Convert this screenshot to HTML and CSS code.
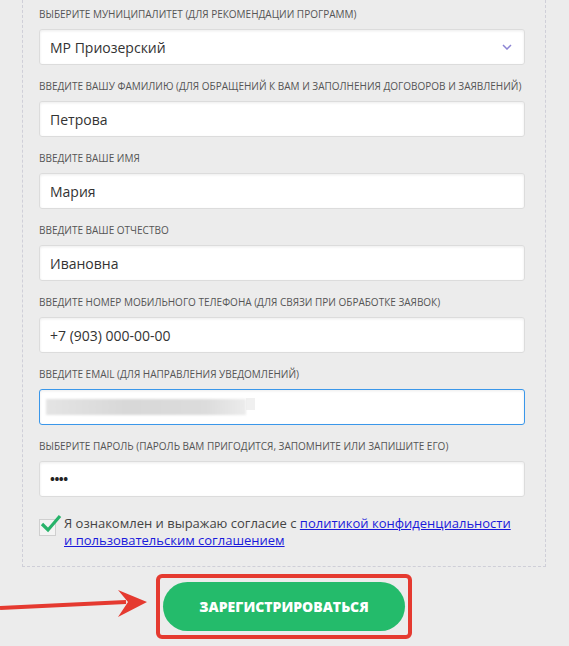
FILE: index.html
```html
<!DOCTYPE html>
<html lang="ru">
<head>
<meta charset="UTF-8">
<meta name="viewport" content="width=device-width, initial-scale=1.0">
<title>Регистрация</title>
<link rel="stylesheet" href="styles.css">
</head>
<body>

  <div class="form-box">
    <div class="field">
      <label class="field-label">Выберите муниципалитет (для рекомендации программ)</label>
      <div class="input select">
        <span>МР Приозерский</span>
        <svg class="chevron" width="10" height="6" viewBox="0 0 10 6"><path d="M1 1l4 4 4-4" fill="none" stroke="#8c84d4" stroke-width="1.5"/></svg>
      </div>
    </div>

    <div class="field">
      <label class="field-label">Введите вашу фамилию (для обращений к вам и заполнения договоров и заявлений)</label>
      <div class="input">Петрова</div>
    </div>

    <div class="field">
      <label class="field-label">Введите ваше имя</label>
      <div class="input">Мария</div>
    </div>

    <div class="field">
      <label class="field-label">Введите ваше отчество</label>
      <div class="input">Ивановна</div>
    </div>

    <div class="field">
      <label class="field-label">Введите номер мобильного телефона (для связи при обработке заявок)</label>
      <div class="input">+7 (903) 000-00-00</div>
    </div>

    <div class="field">
      <label class="field-label">Введите email (для направления уведомлений)</label>
      <div class="input focused">
        <span class="blurred"></span><span class="blurred-end"></span>
      </div>
    </div>

    <div class="field">
      <label class="field-label">Выберите пароль (пароль вам пригодится, запомните или запишите его)</label>
      <div class="input password">&bull;&bull;&bull;&bull;</div>
    </div>

    <div class="agree">
      <div class="checkbox">
        <svg class="check" width="22" height="20" viewBox="0 0 22 20"><path d="M2 10l6 6L20 2" fill="none" stroke="#27b36a" stroke-width="3.2"/></svg>
      </div>
      <p class="agree-text">Я ознакомлен и выражаю согласие с <a href="#">политикой конфиденциальности и пользовательским соглашением</a></p>
    </div>
  </div>

  <div class="actions">
    <svg class="arrow" width="150" height="30" viewBox="0 0 150 30"><path d="M0 21L126 15" stroke="#e53a30" stroke-width="4"/><path d="M118 3L147 15L118 30L128 15Z" fill="#e53a30"/></svg>
    <div class="highlight">
      <button class="register">Зарегистрироваться</button>
    </div>
  </div>

</body>
</html>
```

FILE: styles.css
```css
body {
  margin: 0;
  padding: 0;
  background-color: #ececec;
  font-family: "Open Sans", Arial, sans-serif;
}

.form-box {
  width: 486px;
  margin-left: 22px;
  padding: 7px 20px 17px 16px;
  border: 1px dashed #cfcfd8;
  border-top: none;
}

.field {
  margin-bottom: 14px;
}

.field-label {
  display: block;
  height: 14px;
  margin-bottom: 8px;
  font-size: 10px;
  line-height: 14px;
  text-transform: uppercase;
  color: #555;
  white-space: nowrap;
}

.input {
  box-sizing: border-box;
  height: 36px;
  padding: 0 10px;
  display: flex;
  align-items: center;
  background-color: #fff;
  border: 1px solid #dcdcdc;
  border-radius: 3px;
  box-shadow: inset 0 1px 3px rgba(0, 0, 0, 0.08);
  font-size: 14px;
  color: #333;
}

.select {
  justify-content: space-between;
}

.chevron {
  margin-right: 2px;
}

.focused {
  border-color: #3a97ea;
  padding-left: 6px;
}

.blurred {
  width: 200px;
  height: 16px;
  background: linear-gradient(to right, #e4e4e4, #d8d8d8 40%, #dcdcdc 80%, #ececec);
  filter: blur(1px);
}

.blurred-end {
  width: 9px;
  height: 12px;
  margin-top: -6px;
  background-color: #f0f0f0;
}

.password {
  font-size: 13px;
  font-weight: bold;
  letter-spacing: -0.5px;
  color: #222;
}

.agree {
  display: flex;
  align-items: flex-start;
  gap: 8px;
  margin-top: 18px;
}

.checkbox {
  position: relative;
  flex: none;
  width: 15px;
  height: 15px;
  margin-top: 4px;
  background-color: #f4f4f4;
  border: 1px solid #cfcfcf;
}

.check {
  position: absolute;
  left: 0;
  top: -6px;
}

.agree-text {
  width: 452px;
  margin: 0;
  font-size: 13px;
  line-height: 17px;
  color: #444;
}

.agree-text a {
  color: #1a1adb;
}

.actions {
  position: relative;
  display: flex;
  justify-content: center;
  padding: 7px 0 0 0;
  width: 568px;
}

.arrow {
  position: absolute;
  left: 0;
  top: 20px;
}

.highlight {
  padding: 4px 3px;
  border: 4px solid #e53a30;
  border-radius: 6px;
}

.register {
  width: 242px;
  height: 49px;
  border: none;
  border-radius: 25px;
  background-color: #24bb6b;
  color: #fff;
  font-family: "Open Sans", Arial, sans-serif;
  font-size: 14px;
  font-weight: 800;
  text-transform: uppercase;
  cursor: pointer;
}
```
